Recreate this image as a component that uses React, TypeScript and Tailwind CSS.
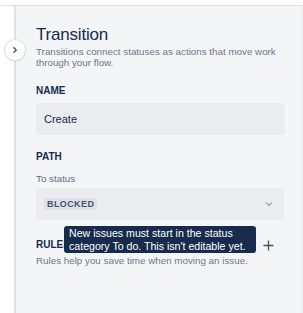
import React from "react";

export default function App() {
  return (
    <div
      className="relative w-[303px] h-[313px] bg-white overflow-hidden"
      style={{ fontFamily: '"Liberation Sans", Arial, sans-serif' }}
    >
      <div className="h-[5px]" />
      <div className="h-[308px] border-t border-[#dfe1e6] pl-[14px]">
        <div className="h-full bg-[#f4f5f7] border-l-2 border-[#dfe1e6] border-r border-r-[#ebecf0] pl-[20px] pr-[17px] pt-[19px] text-[#172b4d]">
          <h1 className="text-[17px] leading-[20px] font-medium tracking-[-0.2px]">Transition</h1>
          <p className="mt-[1px] text-[9.8px] leading-[11px] text-[#6b778c]">
            Transitions connect statuses as actions that move work
            <br />
            through your flow.
          </p>

          <div className="mt-[17px] text-[10px] leading-[12px] font-bold text-[#172b4d]">NAME</div>
          <div className="mt-[6px] h-[32px] w-[249px] rounded-[3px] bg-[#ebecf0] flex items-center pl-[8px] text-[11px] text-[#172b4d]">
            Create
          </div>

          <div className="mt-[16px] text-[10px] leading-[12px] font-bold text-[#172b4d]">PATH</div>
          <div className="mt-[10px] text-[9.8px] leading-[12px] text-[#5e6c84]">To status</div>
          <div className="mt-[3px] h-[32px] w-[248px] rounded-[3px] bg-[#ebecf0] flex items-center justify-between pl-[8px] pr-[10px]">
            <span className="h-[12px] px-[3px] rounded-[3px] bg-[#dfe1e6] text-[9px] leading-[12px] font-bold tracking-[0.4px] text-[#42526e]">
              BLOCKED
            </span>
            <svg width="10" height="10" viewBox="0 0 10 10" fill="none">
              <path d="M2.5 4 L5 6.5 L7.5 4" stroke="#a5adba" strokeWidth="1.5" strokeLinecap="round" strokeLinejoin="round" />
            </svg>
          </div>

          <div className="relative mt-[18px] h-[14px] flex items-center justify-between w-[248px]">
            <span className="text-[10px] leading-[14px] font-bold text-[#172b4d]">RULES</span>
            <svg width="11" height="11" viewBox="0 0 11 11" fill="none" className="mr-[10px]">
              <path d="M5.5 0.5 V10.5 M0.5 5.5 H10.5" stroke="#42526e" strokeWidth="1.3" />
            </svg>
            <div className="absolute left-[28px] top-[-12px] w-[192px] h-[27px] rounded-[3px] bg-[#172b4d] px-[5px] pt-[1px] text-[10.6px] leading-[12.5px] text-white whitespace-nowrap">
              New issues must start in the status
              <br />
              category To do. This isn't editable yet.
            </div>
          </div>
          <p className="mt-[3px] text-[9.8px] leading-[12px] text-[#6b778c]">
            Rules help you save time when moving an issue.
          </p>
        </div>
      </div>

      <div className="absolute left-[4px] top-[39px] w-[22px] h-[22px] rounded-full bg-white border border-[#dfe1e6] shadow-[0_1px_1px_rgba(9,30,66,0.1)] flex items-center justify-center">
        <svg width="10" height="10" viewBox="0 0 10 10" fill="none">
          <path d="M4 2.8 L6.2 5 L4 7.2" stroke="#42526e" strokeWidth="1.5" strokeLinecap="round" strokeLinejoin="round" />
        </svg>
      </div>
    </div>
  );
}
